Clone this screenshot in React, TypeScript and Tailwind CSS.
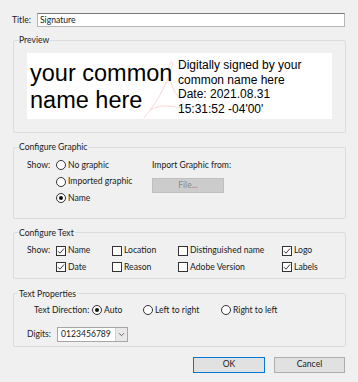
import type { ReactNode } from 'react';

const ui = "font-['Lato',sans-serif] text-[8.6px] text-[#1a1a1a]";

function Group({ title, className, children }: { title: string; className?: string; children: ReactNode }) {
  return (
    <fieldset className={`w-[333px] border border-[#dcdcdc] rounded-[2px] p-0 ${className ?? ''}`}>
      <legend className="ml-[4px] px-[1px] leading-[12px]">{title}</legend>
      {children}
    </fieldset>
  );
}

function Radio({ checked, label }: { checked?: boolean; label: string }) {
  return (
    <div className="flex items-center gap-[2px] whitespace-nowrap">
      <span className="w-[10px] h-[10px] rounded-full border border-[#333] bg-white flex items-center justify-center">
        {checked && <span className="w-[4px] h-[4px] rounded-full bg-[#111]" />}
      </span>
      <span>{label}</span>
    </div>
  );
}

function Check({ checked, label, className }: { checked?: boolean; label: string; className?: string }) {
  return (
    <div className={`flex items-center gap-[2px] whitespace-nowrap ${className ?? ''}`}>
      <span className="w-[10px] h-[10px] border border-[#333] bg-white flex items-center justify-center">
        {checked && (
          <svg width="8" height="8" viewBox="0 0 8 8" fill="none">
            <path d="M1 4.2 L3 6.2 L7 1.5" stroke="#222" strokeWidth="0.9" />
          </svg>
        )}
      </span>
      <span>{label}</span>
    </div>
  );
}

export default function App() {
  return (
    <div className={`w-[358px] h-[382px] bg-[#f0f0f0] pl-[13px] overflow-hidden ${ui}`}>
      {/* title */}
      <div className="flex items-center pt-[13px] -ml-[1px]">
        <span className="w-[25px]">Title:</span>
        <div className="w-[308px] h-[14px] bg-white border border-[#b5b5b5] border-t-[#7a7a7a] flex items-center pl-[2px]">
          Signature
        </div>
      </div>

      {/* preview */}
      <Group title="Preview" className="mt-[7px]">
        <div className="relative mt-[7px] mb-[13px] ml-[13px] w-[305px] h-[66px] bg-white flex overflow-hidden">
          <svg className="absolute left-[115px] top-[5px]" width="45" height="62" viewBox="0 0 45 62" fill="none">
            <path d="M2 60 C 12 48, 24 30, 30 8 C 32 2, 28 2, 27 8 C 25 18, 30 32, 40 44 C 43 48, 44 50, 40 50 C 30 48, 18 46, 8 52" stroke="#f7d8d8" strokeWidth="1" />
          </svg>
          <div className="relative w-[151px] pl-[3px] pt-[7px] font-['Liberation_Sans',Arial,sans-serif] text-[23.5px] leading-[27px] text-black whitespace-nowrap">
            your common
            <br />
            name here
          </div>
          <div className="relative pt-[5px] font-['Liberation_Sans',Arial,sans-serif] text-[12px] leading-[14.5px] text-black whitespace-nowrap">
            Digitally signed by your
            <br />
            common name here
            <br />
            Date: 2021.08.31
            <br />
            15:31:52 -04'00'
          </div>
        </div>
      </Group>

      {/* configure graphic */}
      <Group title="Configure Graphic" className="mt-[8px]">
        <div className="flex pl-[13px] pt-[4px] pb-[11px]">
          <div className="w-[29px] h-[16.5px] flex items-center">Show:</div>
          <div className="w-[96px] flex flex-col">
            <div className="h-[16.5px] flex items-center"><Radio label="No graphic" /></div>
            <div className="h-[16.5px] flex items-center"><Radio label="Imported graphic" /></div>
            <div className="h-[16.5px] flex items-center"><Radio checked label="Name" /></div>
          </div>
          <div className="flex flex-col">
            <div className="h-[16.5px] flex items-center">Import Graphic from:</div>
            <div className="mt-[4.5px] w-[72px] h-[15px] bg-[#cccccc] border border-[#bfbfbf] flex items-center justify-center text-[#8a8a8a]">
              File...
            </div>
          </div>
        </div>
      </Group>

      {/* configure text */}
      <Group title="Configure Text" className="mt-[8px]">
        <div className="flex pl-[13px] pt-[4px] pb-[2px]">
          <div className="w-[29px] h-[16.5px] flex items-center">Show:</div>
          <div className="grid grid-cols-[56px_66px_104px_auto] auto-rows-[16.5px] items-center">
            <Check checked label="Name" />
            <Check label="Location" />
            <Check label="Distinguished name" />
            <Check checked label="Logo" />
            <Check checked label="Date" />
            <Check label="Reason" />
            <Check label="Adobe Version" />
            <Check checked label="Labels" />
          </div>
        </div>
      </Group>

      {/* text properties */}
      <Group title="Text Properties" className="mt-[9px]">
        <div className="flex flex-col pl-[20px] pt-[3px] pb-[4px]">
          <div className="h-[16px] flex items-center whitespace-nowrap">
            <span className="w-[58px]">Text Direction:</span>
            <div className="w-[51px]"><Radio checked label="Auto" /></div>
            <div className="w-[78px]"><Radio label="Left to right" /></div>
            <Radio label="Right to left" />
          </div>
          <div className="mt-[8px] -ml-[7px] h-[15px] flex items-center">
            <span className="w-[30px]">Digits:</span>
            <div className="w-[71px] h-[15px] bg-white border border-[#a6a6a6] flex items-center">
              <span className="flex-1 pl-[3px]">0123456789</span>
              <span className="w-[12px] h-full bg-[#e8e8e8] border-l border-[#d0d0d0] flex items-center justify-center">
                <svg width="7" height="5" viewBox="0 0 7 5" fill="none">
                  <path d="M1 1.2 L3.5 3.7 L6 1.2" stroke="#555" strokeWidth="0.9" />
                </svg>
              </span>
            </div>
          </div>
        </div>
      </Group>

      {/* buttons */}
      <div className="w-[333px] mt-[10px] flex justify-end gap-[9px] pr-[1px]">
        <div className="w-[72px] h-[16px] bg-[#e1e1e1] border border-[#0078d7] flex items-center justify-center">OK</div>
        <div className="w-[71px] h-[16px] bg-[#e1e1e1] border border-[#adadad] flex items-center justify-center">Cancel</div>
      </div>
    </div>
  );
}
